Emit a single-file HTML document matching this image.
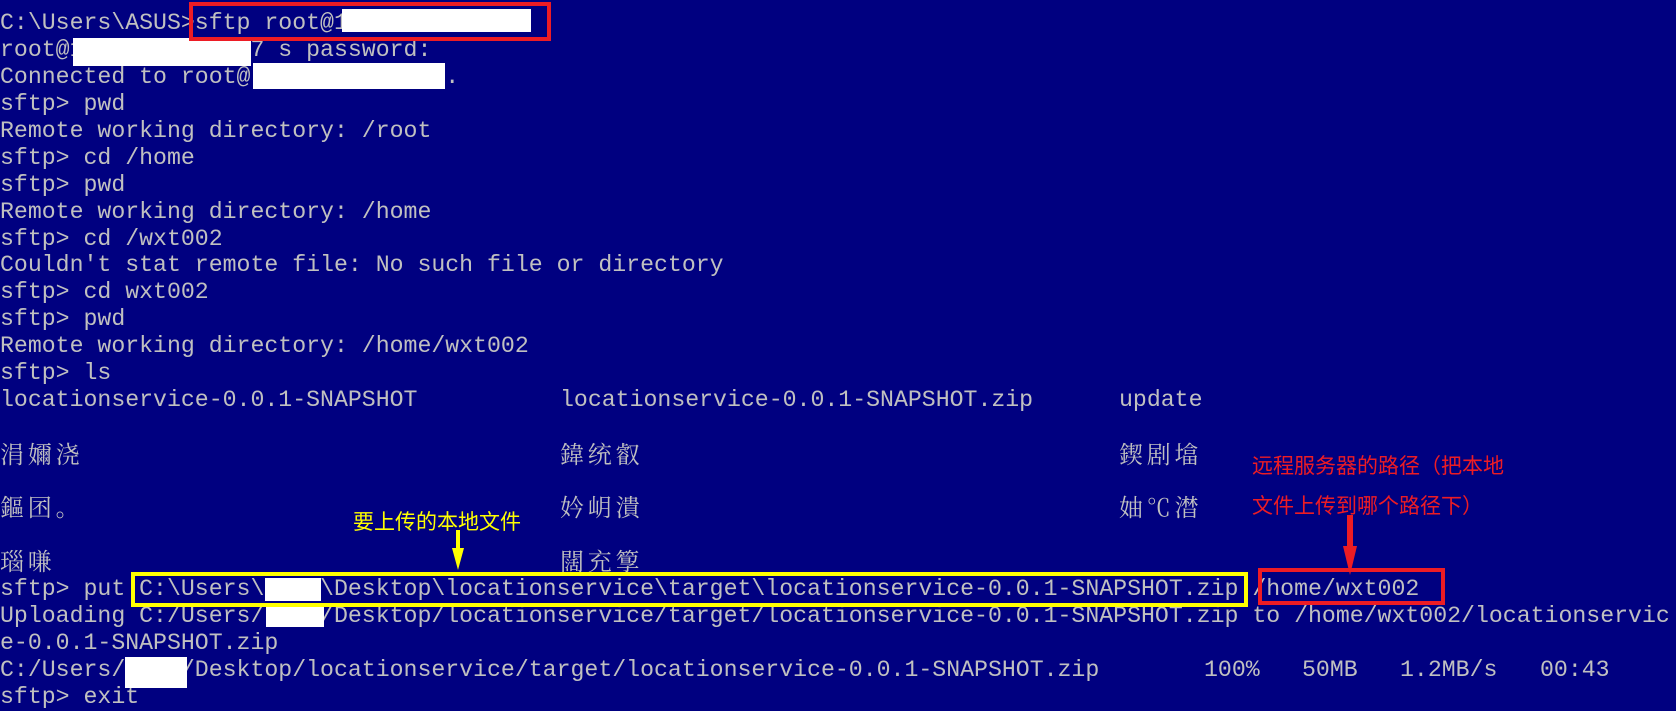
<!DOCTYPE html>
<html><head><meta charset="utf-8"><style>
html,body{margin:0;padding:0;}
body{width:1676px;height:709px;background:#000080;position:relative;overflow:hidden;
font-family:"Liberation Mono","Noto Sans CJK SC",monospace;font-size:23.2px;color:#c0c0c0;}
.l{position:absolute;left:0;height:27px;line-height:27px;white-space:pre;}
.c{position:absolute;top:0;white-space:pre;}
.z{display:inline-block;width:27.8px;font-family:"Noto Serif CJK SC","Noto Sans CJK SC",sans-serif;font-size:24px;}
.w{position:absolute;background:#fff;}
.box{position:absolute;box-sizing:border-box;}
.ann{position:absolute;font-family:"Noto Sans CJK SC",sans-serif;font-size:21px;white-space:nowrap;line-height:24px;}
</style></head><body>
<div class="l" style="top:10px">C:\Users\ASUS&gt;sftp root@1</div>
<div class="l" style="top:37px">root@1            7 s password:</div>
<div class="l" style="top:64px">Connected to root@              .</div>
<div class="l" style="top:91px">sftp&gt; pwd</div>
<div class="l" style="top:118px">Remote working directory: /root</div>
<div class="l" style="top:145px">sftp&gt; cd /home</div>
<div class="l" style="top:172px">sftp&gt; pwd</div>
<div class="l" style="top:199px">Remote working directory: /home</div>
<div class="l" style="top:226px">sftp&gt; cd /wxt002</div>
<div class="l" style="top:252px">Couldn't stat remote file: No such file or directory</div>
<div class="l" style="top:279px">sftp&gt; cd wxt002</div>
<div class="l" style="top:306px">sftp&gt; pwd</div>
<div class="l" style="top:333px">Remote working directory: /home/wxt002</div>
<div class="l" style="top:360px">sftp&gt; ls</div>
<div class="l" style="top:387px;width:1676px"><span class="c" style="left:0">locationservice-0.0.1-SNAPSHOT</span><span class="c" style="left:560px">locationservice-0.0.1-SNAPSHOT.zip</span><span class="c" style="left:1119px">update</span></div>
<div class="l" style="top:439px;width:1676px"><span class="c" style="left:0"><span class="z">涓</span><span class="z">嬭</span><span class="z">浇</span></span><span class="c" style="left:560px"><span class="z">鍏</span><span class="z">统</span><span class="z">叡</span></span><span class="c" style="left:1119px"><span class="z">鍥</span><span class="z">剧</span><span class="z">墖</span></span></div>
<div class="l" style="top:492px;width:1676px"><span class="c" style="left:0"><span class="z">鏂</span><span class="z">囨</span><span class="z">。</span></span><span class="c" style="left:560px"><span class="z">妗</span><span class="z">岄</span><span class="z">潰</span></span><span class="c" style="left:1119px"><span class="z">妯</span><span class="z">℃</span><span class="z">澘</span></span></div>
<div class="l" style="top:546px;width:1676px"><span class="c" style="left:0"><span class="z">瑙</span><span class="z">嗛</span></span><span class="c" style="left:560px"><span class="z">闊</span><span class="z">充</span><span class="z">箰</span></span></div>
<div class="l" style="top:576px">sftp&gt; put C:\Users\    \Desktop\locationservice\target\locationservice-0.0.1-SNAPSHOT.zip /home/wxt002</div>
<div class="l" style="top:603px">Uploading C:/Users/    /Desktop/locationservice/target/locationservice-0.0.1-SNAPSHOT.zip to /home/wxt002/locationservic</div>
<div class="l" style="top:630px">e-0.0.1-SNAPSHOT.zip</div>
<div class="l" style="top:657px;width:1676px"><span class="c" style="left:0">C:/Users/    /Desktop/locationservice/target/locationservice-0.0.1-SNAPSHOT.zip</span><span class="c" style="left:1204px">100%</span><span class="c" style="left:1302px">50MB</span><span class="c" style="left:1400px">1.2MB/s</span><span class="c" style="left:1540px">00:43</span></div>
<div class="l" style="top:684px">sftp&gt; exit</div>

<div class="w" style="left:342px;top:9px;width:189px;height:23px"></div>
<div class="w" style="left:73px;top:38px;width:178px;height:28px"></div>
<div class="w" style="left:253px;top:63px;width:192px;height:26px"></div>
<div class="w" style="left:265px;top:578px;width:56px;height:23px"></div>
<div class="w" style="left:266px;top:607px;width:58px;height:20px"></div>
<div class="w" style="left:125px;top:657px;width:62px;height:31px"></div>

<div class="box" style="left:189px;top:2px;width:362px;height:39px;border:4px solid #ed1c24"></div>
<div class="box" style="left:131px;top:572px;width:1117px;height:35px;border:4px solid #ffff00"></div>
<div class="box" style="left:1258px;top:568px;width:187px;height:37px;border:4px solid #ed1c24"></div>

<div class="ann" style="left:1252px;top:453px;color:#ed1c24">远程服务器的路径（把本地</div>
<div class="ann" style="left:1252px;top:493px;color:#ed1c24">文件上传到哪个路径下）</div>
<div class="ann" style="left:353px;top:509px;color:#ffff00">要上传的本地文件</div>
<svg style="position:absolute;left:0;top:0" width="1676" height="709">
<rect x="1347" y="515" width="6" height="34" fill="#ed1c24"/>
<polygon points="1343,546 1357,546 1350,575" fill="#ed1c24"/>
<rect x="456" y="530" width="4" height="20" fill="#ffff00"/>
<polygon points="452,548 464,548 458,570" fill="#ffff00"/>
</svg>
</body></html>
